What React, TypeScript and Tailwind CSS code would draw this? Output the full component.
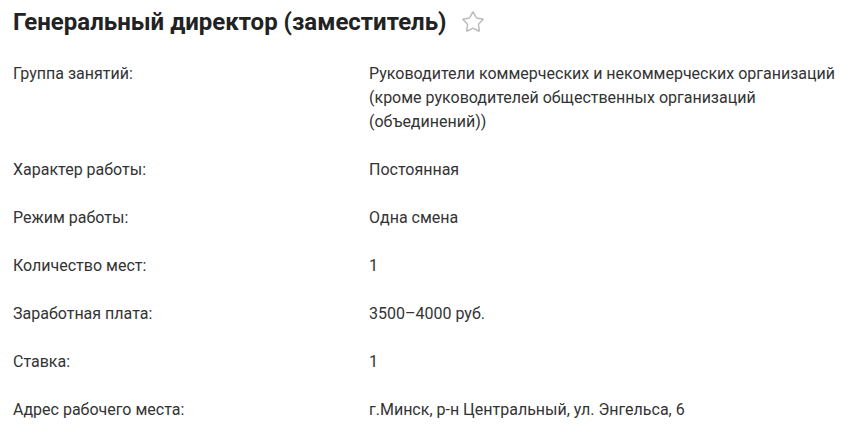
import { Star } from "lucide-react";

const rows: [string, string][] = [
  [
    "Группа занятий:",
    "Руководители коммерческих и некоммерческих организаций (кроме руководителей общественных организаций (объединений))",
  ],
  ["Характер работы:", "Постоянная"],
  ["Режим работы:", "Одна смена"],
  ["Количество мест:", "1"],
  ["Заработная плата:", "3500–4000 руб."],
  ["Ставка:", "1"],
  ["Адрес рабочего места:", "г.Минск, р-н Центральный, ул. Энгельса, 6"],
];

export default function App() {
  return (
    <div className="min-h-screen bg-white pl-[13px] pr-[6px] pt-[6px] font-['Roboto',sans-serif] text-[#333]">
      <div className="flex items-center gap-[14px]">
        <h1 className="text-[24px] font-bold leading-[32px] text-[#222]">
          Генеральный директор (заместитель)
        </h1>
        <Star className="h-[24px] w-[24px] text-[#bbb]" strokeWidth={1.5} />
      </div>

      <div className="mt-[24px] flex flex-col gap-[24px]">
        {rows.map(([label, value]) => (
          <div key={label} className="grid grid-cols-[356px_1fr] text-[16px] leading-[24px]">
            <div>{label}</div>
            <div>{value}</div>
          </div>
        ))}
      </div>
    </div>
  );
}
